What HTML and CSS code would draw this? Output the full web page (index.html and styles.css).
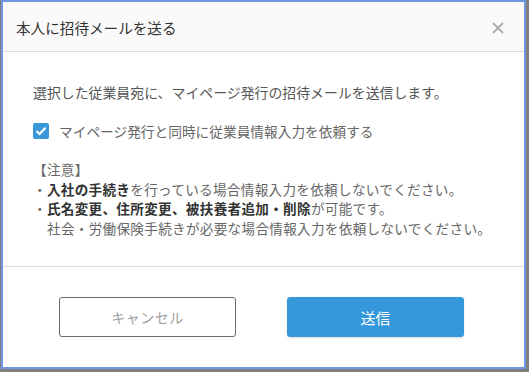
FILE: index.html
```html
<!DOCTYPE html>
<html>
<head>
    <title>本人に招待メールを送る</title>
    <link rel="stylesheet" href="styles.css">
</head>
<body>
    <div class="dialog">
        <div class="dialog-header">
            <h2 class="dialog-title">本人に招待メールを送る</h2>
            <span class="close-btn">
                <svg width="12" height="12" viewBox="0 0 12 12">
                    <path d="M1 1 L11 11 M11 1 L1 11" stroke="#adadad" stroke-width="1.8" fill="none"/>
                </svg>
            </span>
        </div>
        <div class="dialog-body">
            <p class="lead">選択した従業員宛に、マイページ発行の招待メールを送信します。</p>
            <label class="check-row">
                <span class="checkbox">
                    <svg width="12" height="10" viewBox="0 0 12 10">
                        <path d="M1.5 5 L4.6 8 L10.5 1.8" stroke="#fff" stroke-width="2.2" fill="none"/>
                    </svg>
                </span>
                <span class="check-label">マイページ発行と同時に従業員情報入力を依頼する</span>
            </label>
            <div class="notice">
                <div>【注意】</div>
                <div>・<b>入社の手続き</b>を行っている場合情報入力を依頼しないでください。</div>
                <div>・<b>氏名変更、住所変更、被扶養者追加・削除</b>が可能です。</div>
                <div class="indent">社会・労働保険手続きが必要な場合情報入力を依頼しないでください。</div>
            </div>
        </div>
        <div class="dialog-footer">
            <button class="btn btn-cancel">キャンセル</button>
            <button class="btn btn-primary">送信</button>
        </div>
    </div>
</body>
</html>
```

FILE: styles.css
```css
body {
    margin: 0;
    background: #7f7f7f;
    font-family: "Noto Sans CJK JP", "Noto Sans", sans-serif;
}
.dialog {
    width: 521px;
    height: 365px;
    margin-left: 1px;
    border: 2px solid #6f96e2;
    background: #fff;
    display: flex;
    flex-direction: column;
}
.dialog-header {
    height: 49px;
    background: #fafafa;
    border-bottom: 1px solid #dcdcdc;
    display: flex;
    align-items: center;
    justify-content: space-between;
    padding: 0 20px 0 13px;
}
.dialog-title {
    margin: 0;
    font-size: 14.6px;
    font-weight: normal;
    color: #333;
    padding-top: 1px;
}
.close-btn {
    display: flex;
    padding-top: 3px;
}
.dialog-body {
    padding: 30px 30px 28px;
    border-bottom: 1px solid #dcdcdc;
    font-size: 14px;
    color: #555;
}
.lead {
    margin: 0;
    line-height: 20px;
    font-size: 13.9px;
}
.check-row {
    display: flex;
    align-items: center;
    gap: 10px;
    margin-top: 19px;
    line-height: 20px;
}
.checkbox {
    width: 16px;
    height: 16px;
    border-radius: 2px;
    background: #3a97d8;
    display: flex;
    align-items: center;
    justify-content: center;
}
.check-label {
    color: #666;
    font-size: 13.7px;
}
.notice {
    margin-top: 19px;
    line-height: 19.5px;
    color: #666;
    font-size: 13.6px;
    letter-spacing: 0.3px;
    white-space: nowrap;
}
.notice b {
    color: #333;
}
.notice .indent {
    padding-left: 14px;
}
.dialog-footer {
    flex: 1;
    display: flex;
    justify-content: center;
    align-items: flex-start;
    gap: 51px;
    padding-top: 30px;
    padding-right: 4px;
}
.btn {
    width: 177px;
    height: 40px;
    border-radius: 3px;
    font-family: inherit;
    font-size: 14px;
    cursor: pointer;
}
.btn-cancel {
    background: #fff;
    border: 1px solid #6b6b6b;
    color: #a0a0a0;
    letter-spacing: 0.5px;
}
.btn-primary {
    background: #3498db;
    border: 1px solid #3498db;
    color: #fff;
    font-size: 15px;
    box-shadow: 0 1px 2px rgba(0, 0, 0, 0.15);
}
```
